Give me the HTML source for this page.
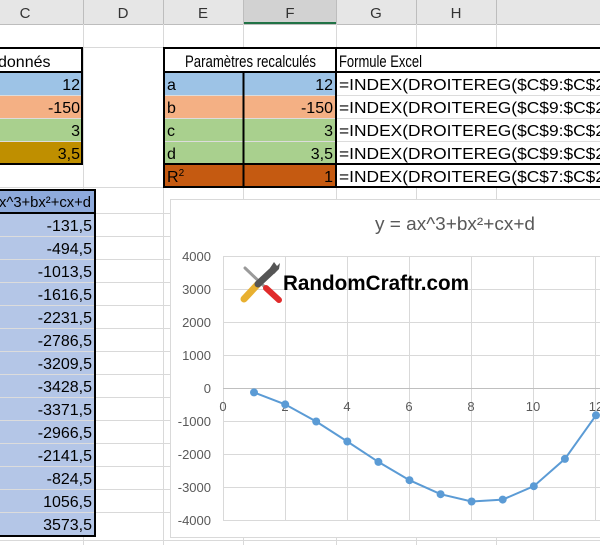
<!DOCTYPE html>
<html><head><meta charset="utf-8"><style>
html,body{margin:0;padding:0;background:#fff;overflow:hidden}
svg{display:block;font-family:"Liberation Sans",sans-serif}
</style></head><body>
<svg width="600" height="545" viewBox="0 0 600 545" xmlns="http://www.w3.org/2000/svg">
<rect width="600" height="545" fill="#fff"/>
<rect x="0" y="0" width="600" height="24" fill="#e6e6e6"/>
<rect x="243" y="0" width="93" height="24" fill="#d2d2d2"/>
<rect x="243" y="22" width="93" height="3" fill="#217346"/>
<g stroke="#bdbdbd" stroke-width="1">
<line x1="83.5" y1="0" x2="83.5" y2="24"/><line x1="163.5" y1="0" x2="163.5" y2="24"/><line x1="243.5" y1="0" x2="243.5" y2="24"/><line x1="336.5" y1="0" x2="336.5" y2="24"/><line x1="416.5" y1="0" x2="416.5" y2="24"/><line x1="496.5" y1="0" x2="496.5" y2="24"/><line x1="0" y1="24.5" x2="600" y2="24.5"/>
</g>
<g font-size="15" fill="#333" text-anchor="middle">
<text x="25" y="18">C</text><text x="123" y="18">D</text><text x="203" y="18">E</text><text x="290" y="18">F</text><text x="376" y="18">G</text><text x="456" y="18">H</text>
</g>
<g stroke="#d9d9d9" stroke-width="1">
<line x1="83.5" y1="24" x2="83.5" y2="545"/><line x1="163.5" y1="24" x2="163.5" y2="545"/><line x1="243.5" y1="24" x2="243.5" y2="545"/><line x1="336.5" y1="24" x2="336.5" y2="545"/><line x1="416.5" y1="24" x2="416.5" y2="545"/><line x1="496.5" y1="24" x2="496.5" y2="545"/>
<line x1="0" y1="47.5" x2="600" y2="47.5"/><line x1="0" y1="187.5" x2="600" y2="187.5"/>
<line x1="0" y1="213.5" x2="170" y2="213.5"/><line x1="0" y1="236.5" x2="170" y2="236.5"/><line x1="0" y1="259.5" x2="170" y2="259.5"/><line x1="0" y1="282.5" x2="170" y2="282.5"/><line x1="0" y1="305.5" x2="170" y2="305.5"/><line x1="0" y1="328.5" x2="170" y2="328.5"/><line x1="0" y1="351.5" x2="170" y2="351.5"/><line x1="0" y1="374.5" x2="170" y2="374.5"/><line x1="0" y1="397.5" x2="170" y2="397.5"/><line x1="0" y1="420.5" x2="170" y2="420.5"/><line x1="0" y1="443.5" x2="170" y2="443.5"/><line x1="0" y1="466.5" x2="170" y2="466.5"/><line x1="0" y1="489.5" x2="170" y2="489.5"/><line x1="0" y1="512.5" x2="170" y2="512.5"/><line x1="0" y1="540.5" x2="600" y2="540.5"/>
</g>
<rect x="0" y="72" width="82" height="23" fill="#9dc3e6"/>
<rect x="0" y="95" width="82" height="23" fill="#f4b084"/>
<rect x="0" y="118" width="82" height="23" fill="#a9d08e"/>
<rect x="0" y="141" width="82" height="23" fill="#bf8f00"/>
<g stroke="#dcdcdc"><line x1="0" y1="95.5" x2="82" y2="95.5"/><line x1="0" y1="118.5" x2="82" y2="118.5"/><line x1="0" y1="141.5" x2="82" y2="141.5"/></g>
<rect x="-2" y="48" width="84" height="116" fill="none" stroke="#000" stroke-width="2"/>
<line x1="0" y1="72" x2="82" y2="72" stroke="#000" stroke-width="2"/>
<g font-size="16" fill="#000">
<text x="-2" y="67">donnés</text>
<g text-anchor="end"><text x="80" y="90">12</text><text x="80" y="113">-150</text><text x="80" y="136">3</text><text x="80" y="159">3,5</text></g>
</g>
<rect x="0" y="189" width="95" height="24" fill="#8eaadb"/>
<rect x="0" y="213" width="95" height="323" fill="#b4c6e7"/>
<g stroke="#dcdcdc"><line x1="0" y1="236.5" x2="95" y2="236.5"/><line x1="0" y1="259.5" x2="95" y2="259.5"/><line x1="0" y1="282.5" x2="95" y2="282.5"/><line x1="0" y1="305.5" x2="95" y2="305.5"/><line x1="0" y1="328.5" x2="95" y2="328.5"/><line x1="0" y1="351.5" x2="95" y2="351.5"/><line x1="0" y1="374.5" x2="95" y2="374.5"/><line x1="0" y1="397.5" x2="95" y2="397.5"/><line x1="0" y1="420.5" x2="95" y2="420.5"/><line x1="0" y1="443.5" x2="95" y2="443.5"/><line x1="0" y1="466.5" x2="95" y2="466.5"/><line x1="0" y1="489.5" x2="95" y2="489.5"/><line x1="0" y1="512.5" x2="95" y2="512.5"/></g>
<rect x="-2" y="190" width="97" height="346" fill="none" stroke="#000" stroke-width="2"/>
<line x1="0" y1="213" x2="95" y2="213" stroke="#000" stroke-width="2"/>
<text x="-1" y="207" font-size="15" fill="#000" textLength="92" lengthAdjust="spacingAndGlyphs">x^3+bx²+cx+d</text>
<g font-size="16" fill="#000" text-anchor="end">
<text x="92" y="231">-131,5</text><text x="92" y="254">-494,5</text><text x="92" y="277">-1013,5</text><text x="92" y="300">-1616,5</text><text x="92" y="323">-2231,5</text><text x="92" y="346">-2786,5</text><text x="92" y="369">-3209,5</text><text x="92" y="392">-3428,5</text><text x="92" y="415">-3371,5</text><text x="92" y="438">-2966,5</text><text x="92" y="461">-2141,5</text><text x="92" y="484">-824,5</text><text x="92" y="507">1056,5</text><text x="92" y="530">3573,5</text>
</g>
<rect x="164" y="48" width="436" height="24" fill="#fff"/>
<rect x="164" y="72" width="172" height="23" fill="#9dc3e6"/>
<rect x="164" y="95" width="172" height="23" fill="#f4b084"/>
<rect x="164" y="118" width="172" height="46" fill="#a9d08e"/>
<rect x="164" y="164" width="172" height="23" fill="#c55a11"/>
<rect x="336" y="72" width="264" height="115" fill="#fff"/>
<g stroke="#dcdcdc"><line x1="164" y1="95.5" x2="600" y2="95.5"/><line x1="164" y1="118.5" x2="600" y2="118.5"/><line x1="164" y1="141.5" x2="600" y2="141.5"/></g>
<g stroke="#000" stroke-width="2" fill="none">
<rect x="164" y="48" width="440" height="139"/>
<line x1="164" y1="72" x2="600" y2="72"/>
<line x1="164" y1="164" x2="600" y2="164"/>
<line x1="243.5" y1="72" x2="243.5" y2="187"/>
<line x1="336" y1="48" x2="336" y2="187"/>
</g>
<g font-size="16" fill="#000">
<text x="185" y="67" font-size="17" textLength="131" lengthAdjust="spacingAndGlyphs">Paramètres recalculés</text>
<text x="339" y="67" font-size="17" textLength="83" lengthAdjust="spacingAndGlyphs">Formule Excel</text>
<text x="167" y="90">a</text><text x="167" y="113">b</text><text x="167" y="136">c</text><text x="167" y="159">d</text><text x="167" y="182">R<tspan font-size="10" dy="-6">2</tspan></text>
<g text-anchor="end"><text x="333" y="90">12</text><text x="333" y="113">-150</text><text x="333" y="136">3</text><text x="333" y="159">3,5</text><text x="333" y="182">1</text></g>
<text x="339" y="90" textLength="266" lengthAdjust="spacingAndGlyphs">=INDEX(DROITEREG($C$9:$C$2</text>
<text x="339" y="113" textLength="266" lengthAdjust="spacingAndGlyphs">=INDEX(DROITEREG($C$9:$C$2</text>
<text x="339" y="136" textLength="266" lengthAdjust="spacingAndGlyphs">=INDEX(DROITEREG($C$9:$C$2</text>
<text x="339" y="159" textLength="266" lengthAdjust="spacingAndGlyphs">=INDEX(DROITEREG($C$9:$C$2</text>
<text x="339" y="182" textLength="266" lengthAdjust="spacingAndGlyphs">=INDEX(DROITEREG($C$7:$C$2</text>
</g>
<rect x="170.5" y="199.5" width="440" height="338" fill="#fff" stroke="#d9d9d9"/>
<text x="375" y="230" font-size="18" fill="#595959" textLength="160" lengthAdjust="spacingAndGlyphs">y = ax^3+bx²+cx+d</text>
<g stroke="#d9d9d9" stroke-width="1">
<line x1="223" y1="256.5" x2="600" y2="256.5"/><line x1="223" y1="289.5" x2="600" y2="289.5"/><line x1="223" y1="322.5" x2="600" y2="322.5"/><line x1="223" y1="355.5" x2="600" y2="355.5"/><line x1="223" y1="421.5" x2="600" y2="421.5"/><line x1="223" y1="454.5" x2="600" y2="454.5"/><line x1="223" y1="487.5" x2="600" y2="487.5"/><line x1="223" y1="520.5" x2="600" y2="520.5"/>
<line x1="223.5" y1="256" x2="223.5" y2="521"/><line x1="285.5" y1="256" x2="285.5" y2="521"/><line x1="347.5" y1="256" x2="347.5" y2="521"/><line x1="409.5" y1="256" x2="409.5" y2="521"/><line x1="471.5" y1="256" x2="471.5" y2="521"/><line x1="533.5" y1="256" x2="533.5" y2="521"/><line x1="595.5" y1="256" x2="595.5" y2="521"/>
</g>
<line x1="223" y1="388.5" x2="600" y2="388.5" stroke="#bfbfbf"/>
<g font-size="13" fill="#595959" text-anchor="end">
<text x="211" y="261">4000</text><text x="211" y="294">3000</text><text x="211" y="327">2000</text><text x="211" y="360">1000</text><text x="211" y="393">0</text><text x="211" y="426">-1000</text><text x="211" y="459">-2000</text><text x="211" y="492">-3000</text><text x="211" y="525">-4000</text>
</g>
<g font-size="13" fill="#595959" text-anchor="middle">
<text x="223" y="411">0</text><text x="285" y="411">2</text><text x="347" y="411">4</text><text x="409" y="411">6</text><text x="471" y="411">8</text><text x="533" y="411">10</text><text x="596" y="411">12</text>
</g>
<polyline fill="none" stroke="#5b9bd5" stroke-width="2" points="254,392.4 285.2,404.4 316.2,421.5 347.3,441.5 378.4,461.9 409.5,480.2 440.6,494.2 471.6,501.5 502.7,499.6 533.8,486.2 564.9,458.9 596,415.3"/>
<g fill="#5b9bd5">
<circle cx="254" cy="392.4" r="4"/><circle cx="285.2" cy="404.4" r="4"/><circle cx="316.2" cy="421.5" r="4"/><circle cx="347.3" cy="441.5" r="4"/><circle cx="378.4" cy="461.9" r="4"/><circle cx="409.5" cy="480.2" r="4"/><circle cx="440.6" cy="494.2" r="4"/><circle cx="471.6" cy="501.5" r="4"/><circle cx="502.7" cy="499.6" r="4"/><circle cx="533.8" cy="486.2" r="4"/><circle cx="564.9" cy="458.9" r="4"/><circle cx="596" cy="415.3" r="4"/>
</g>
<g stroke-linecap="round">
<line x1="245" y1="268" x2="268" y2="290" stroke="#9a9a9a" stroke-width="3"/>
<line x1="266" y1="288" x2="279" y2="300" stroke="#e02b2b" stroke-width="6"/>
<line x1="244" y1="299" x2="258" y2="284" stroke="#e8b030" stroke-width="7"/>
<line x1="258" y1="284" x2="273" y2="270" stroke="#555" stroke-width="7"/>
<path d="M270 268 l4 -6 l3 4 l3 -3 l-1 6 l-5 5 z" fill="#555"/>
</g>
<text x="283" y="290" font-size="21" font-weight="bold" fill="#000" textLength="186" lengthAdjust="spacingAndGlyphs">RandomCraftr.com</text>
</svg>
</body></html>
